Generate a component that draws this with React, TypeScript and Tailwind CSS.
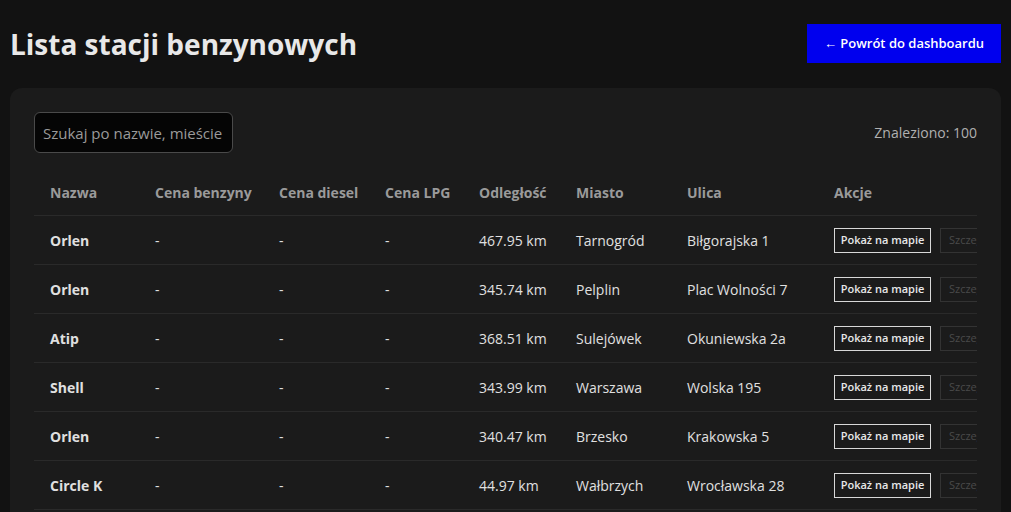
const stations = [
  { name: 'Orlen', distance: '467.95 km', city: 'Tarnogród', street: 'Biłgorajska 1' },
  { name: 'Orlen', distance: '345.74 km', city: 'Pelplin', street: 'Plac Wolności 7' },
  { name: 'Atip', distance: '368.51 km', city: 'Sulejówek', street: 'Okuniewska 2a' },
  { name: 'Shell', distance: '343.99 km', city: 'Warszawa', street: 'Wolska 195' },
  { name: 'Orlen', distance: '340.47 km', city: 'Brzesko', street: 'Krakowska 5' },
  { name: 'Circle K', distance: '44.97 km', city: 'Wałbrzych', street: 'Wrocławska 28' },
];

export default function App() {
  return (
    <div
      className="h-screen overflow-hidden bg-[#121212] text-[#e6e6e6] px-[10px] pt-[24px]"
      style={{ fontFamily: '"Open Sans", "Noto Sans", sans-serif' }}
    >
      <div className="flex items-center justify-between">
        <h1 className="text-[28px] font-bold text-[#e8e8e8] leading-none">Lista stacji benzynowych</h1>
        <button className="bg-[#0000ee] text-white text-[13px] font-semibold h-[39px] w-[194px]">
          ← Powrót do dashboardu
        </button>
      </div>

      <div className="mt-[25px] bg-[#1b1b1b] rounded-xl px-[24px] pt-[24px] pb-[24px]">
        <div className="flex items-center justify-between">
          <input
            placeholder="Szukaj po nazwie, mieście"
            className="w-[199px] h-[41px] bg-[#050505] border border-[#4a4a4a] rounded-md px-[8px] text-[15px] text-[#ddd] placeholder:text-[#9a9a9a] outline-none"
          />
          <span className="text-[14px] text-[#b0b0b0]">Znaleziono: 100</span>
        </div>

        <div className="mt-[18px] overflow-hidden">
          <table className="table-fixed w-[984px] text-[14px] border-collapse whitespace-nowrap">
            <thead>
              <tr className="border-b border-[#2a2a2a] text-[#9a9a9a] text-left">
                <th className="w-[105px] h-[44px] pl-4 font-bold">Nazwa</th>
                <th className="w-[124px] pl-4 font-bold">Cena benzyny</th>
                <th className="w-[106px] pl-4 font-bold">Cena diesel</th>
                <th className="w-[94px] pl-4 font-bold">Cena LPG</th>
                <th className="w-[97px] pl-4 font-bold overflow-hidden">Odległość</th>
                <th className="w-[111px] pl-4 font-bold">Miasto</th>
                <th className="w-[147px] pl-4 font-bold">Ulica</th>
                <th className="w-[200px] pl-4 font-bold">Akcje</th>
              </tr>
            </thead>
            <tbody>
              {stations.map((s, i) => (
                <tr key={i} className="border-b border-[#2a2a2a] text-[#e0e0e0]">
                  <td className="h-[49px] pl-4 pt-[2px] font-bold">{s.name}</td>
                  <td className="pl-4 pt-[2px]">-</td>
                  <td className="pl-4 pt-[2px]">-</td>
                  <td className="pl-4 pt-[2px]">-</td>
                  <td className="pl-4 pt-[2px]">{s.distance}</td>
                  <td className="pl-4 pt-[2px]">{s.city}</td>
                  <td className="pl-4 pt-[2px]">{s.street}</td>
                  <td className="pl-4 pt-[2px]">
                    <div className="flex gap-[9px]">
                      <button className="h-[25px] w-[97px] shrink-0 border border-[#d8d8d8] bg-[#1b1b1b] text-[11px] font-semibold text-[#e8e8e8]">
                        Pokaż na mapie
                      </button>
                      <button className="h-[25px] px-[8px] shrink-0 border border-[#333] text-[11px] text-[#4a4a4a]">
                        Szczegóły
                      </button>
                    </div>
                  </td>
                </tr>
              ))}
            </tbody>
          </table>
        </div>
      </div>
    </div>
  );
}
